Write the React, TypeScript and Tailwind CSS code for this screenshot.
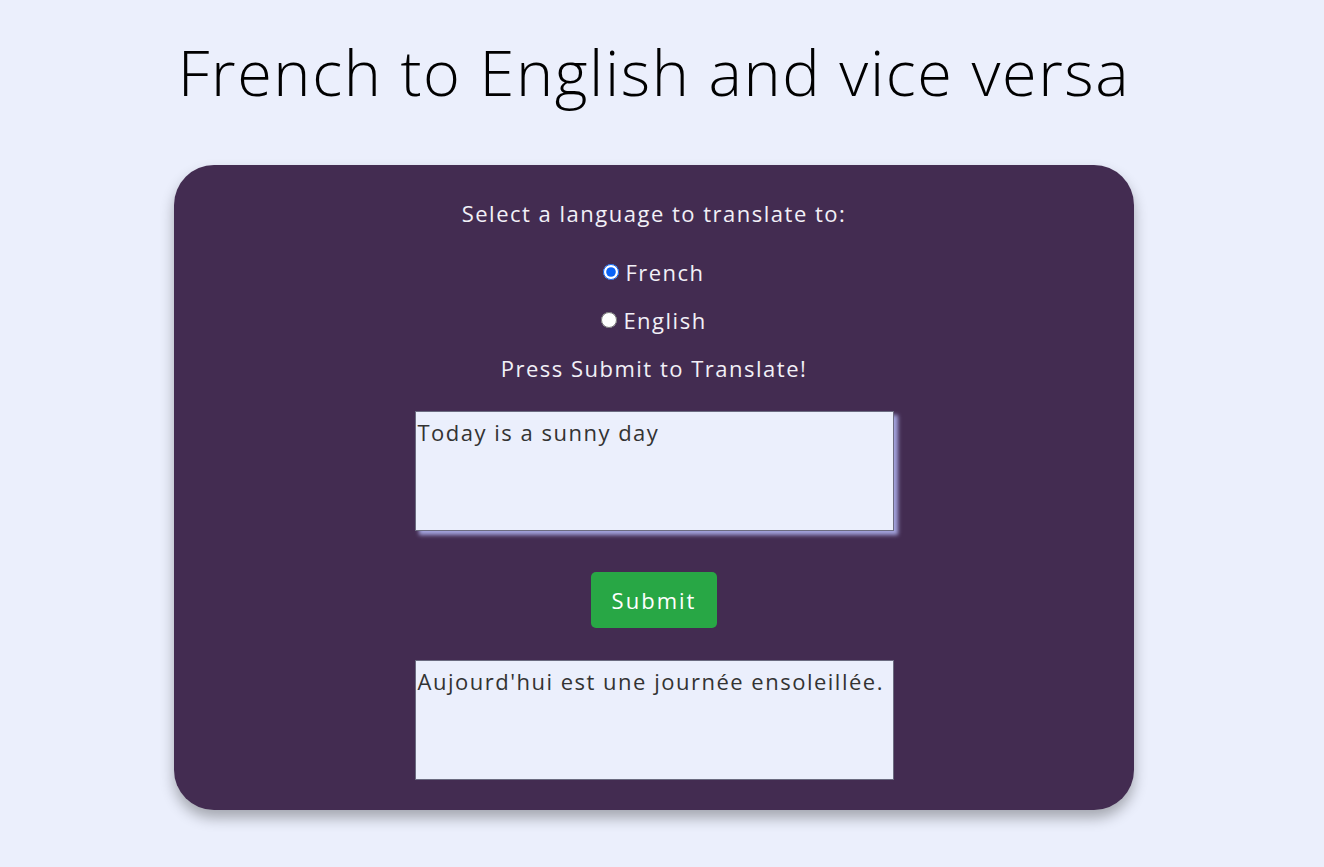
import { useState } from "react";

export default function App() {
  const [lang, setLang] = useState("french");

  return (
    <div className="min-h-screen w-full bg-[#ebeffc] pr-4 flex flex-col items-center font-['Open_Sans',sans-serif]">
      <h1 className="mt-[30px] text-[63px] leading-[84px] font-light text-black tracking-[1.6px]">
        French to English and vice versa
      </h1>

      <div className="mt-[51px] w-[960px] rounded-[40px] bg-[#432c51] shadow-[0_8px_14px_rgba(0,0,0,0.3)] flex flex-col items-center pt-[32px] pb-[30px] text-[#f2f0f7] text-[22px] tracking-[1.5px]">
        <p className="leading-[32px]">Select a language to translate to:</p>

        <label className="mt-[27px] flex items-center gap-[6px] leading-[32px]">
          <input
            type="radio"
            name="lang"
            checked={lang === "french"}
            onChange={() => setLang("french")}
            className="w-4 h-4 accent-[#0b63f6]"
          />
          French
        </label>

        <label className="mt-[16px] flex items-center gap-[6px] leading-[32px]">
          <input
            type="radio"
            name="lang"
            checked={lang === "english"}
            onChange={() => setLang("english")}
            className="w-4 h-4 accent-[#0b63f6]"
          />
          English
        </label>

        <p className="mt-[16px] leading-[32px]">Press Submit to Translate!</p>

        <textarea
          defaultValue="Today is a sunny day"
          className="mt-[27px] w-[479px] h-[120px] bg-[#ebeffc] border border-[#6b6b80] shadow-[4px_4px_4px_#a3a3dc] text-[#333] text-[22px] tracking-[1.5px] leading-[28px] px-[2px] py-[6px] resize-none outline-none"
        />

        <button className="mt-[41px] w-[126px] h-[56px] rounded-[5px] bg-[#28a745] text-white text-[22px] tracking-[2px]">
          Submit
        </button>

        <div className="mt-[32px] w-[479px] h-[120px] bg-[#ebeffc] border border-[#6b6b80] text-[#333] text-[22px] leading-[28px] px-[2px] py-[6px] text-left">
          Aujourd'hui est une journée ensoleillée.
        </div>
      </div>
    </div>
  );
}
